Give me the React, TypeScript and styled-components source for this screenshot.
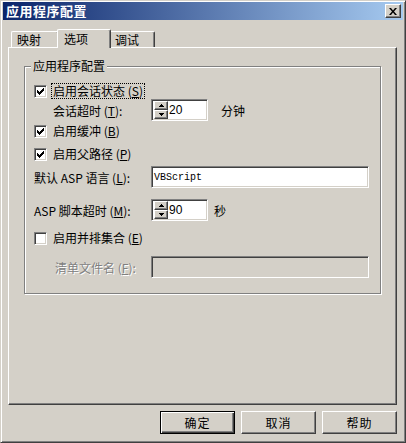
import styled, { createGlobalStyle } from "styled-components";

const GlobalStyle = createGlobalStyle`
  html, body {
    margin: 0;
    padding: 0;
    background: #d4d0c8;
  }
  * {
    box-sizing: border-box;
  }
`;

const FACE = "#d4d0c8";
const SHADOW = "#808080";
const DARK = "#404040";
const FONT = `"Noto Sans CJK SC", "Liberation Sans", sans-serif`;

const Window = styled.div`
  width: 406px;
  height: 443px;
  background: ${FACE};
  border: 1px solid;
  border-color: ${FACE} ${DARK} ${DARK} ${FACE};
  box-shadow: inset 1px 1px #fff, inset -1px -1px ${SHADOW};
  padding: 1px 2px 2px 2px;
  display: flex;
  flex-direction: column;
  font-family: ${FONT};
  font-size: 12px;
  color: #000;
`;

const TitleBar = styled.div`
  height: 18px;
  background: linear-gradient(to right, #0a246a, #a6caf0);
  display: flex;
  align-items: center;
  justify-content: space-between;
  padding: 0 2px 0 3px;
`;

const Title = styled.span`
  color: #fff;
  font-weight: bold;
  font-size: 13px;
  letter-spacing: 0.5px;
  line-height: 18px;
`;

const CloseButton = styled.div`
  width: 16px;
  height: 14px;
  background: ${FACE};
  border: 1px solid;
  border-color: #fff ${DARK} ${DARK} #fff;
  box-shadow: inset -1px -1px ${SHADOW};
  display: flex;
  align-items: center;
  justify-content: center;
`;

const Body = styled.div`
  flex: 1;
  display: flex;
  flex-direction: column;
  padding: 8px 6px 0 5px;
`;

const TabRow = styled.div`
  display: flex;
  align-items: flex-end;
  height: 19px;
  padding-left: 3px;
  position: relative;
  z-index: 1;
`;

const Tab = styled.div<{ $width: number; $active?: boolean }>`
  width: ${({ $width }) => $width}px;
  height: ${({ $active }) => ($active ? 19 : 16)}px;
  margin: ${({ $active }) => ($active ? "0 -2px -1px -2px" : "0")};
  padding-left: ${({ $active }) => ($active ? 6 : 5)}px;
  background: ${FACE};
  border-top: 1px solid #fff;
  border-left: 1px solid #fff;
  border-right: 1px solid ${DARK};
  border-radius: 2px 2px 0 0;
  box-shadow: inset -1px 0 ${SHADOW};
  line-height: ${({ $active }) => ($active ? 17 : 15)}px;
  position: relative;
  z-index: ${({ $active }) => ($active ? 2 : 1)};
`;

const Panel = styled.div`
  height: 358px;
  border: 1px solid;
  border-color: #fff ${DARK} ${DARK} #fff;
  box-shadow: inset -1px -1px ${SHADOW};
  padding: 18px 15px 0 15px;
`;

const GroupBox = styled.div`
  position: relative;
  height: 228px;
  border: 1px solid ${SHADOW};
  box-shadow: 1px 1px #fff, inset 1px 1px #fff;
  padding: 0 0 0 9px;
  display: flex;
  flex-direction: column;
`;

const Legend = styled.span`
  position: absolute;
  top: -9px;
  left: 6px;
  padding: 0 2px;
  background: ${FACE};
  line-height: 16px;
`;

const Row = styled.div<{ $top: number; $height: number }>`
  margin-top: ${({ $top }) => $top}px;
  height: ${({ $height }) => $height}px;
  display: flex;
  align-items: center;
`;

const Box = styled.div`
  width: 13px;
  height: 13px;
  background: #fff;
  border: 1px solid;
  border-color: ${SHADOW} #fff #fff ${SHADOW};
  box-shadow: inset 1px 1px ${DARK}, inset -1px -1px ${FACE};
  display: flex;
  align-items: center;
  justify-content: center;
  flex-shrink: 0;
`;

const CheckLabel = styled.span<{ $focus?: boolean }>`
  margin-left: 4px;
  padding: 0 1px;
  line-height: 14px;
  white-space: pre;
  border: 1px dotted ${({ $focus }) => ($focus ? "#000" : "transparent")};
`;

const FieldLabel = styled.span<{ $indent?: number; $disabled?: boolean }>`
  width: 117px;
  flex-shrink: 0;
  padding-left: ${({ $indent = 0 }) => $indent}px;
  white-space: pre;
  color: ${({ $disabled }) => ($disabled ? SHADOW : "#000")};
  text-shadow: ${({ $disabled }) => ($disabled ? "1px 1px #fff" : "none")};
`;

const Sunken = styled.div<{ $width: number; $disabled?: boolean }>`
  width: ${({ $width }) => $width}px;
  height: 22px;
  background: ${({ $disabled }) => ($disabled ? FACE : "#fff")};
  border: 1px solid;
  border-color: ${SHADOW} #fff #fff ${SHADOW};
  box-shadow: inset 1px 1px ${DARK}, inset -1px -1px ${FACE};
  display: flex;
  align-items: center;
  padding: 2px;
`;

const MonoText = styled.span`
  font-family: "Liberation Mono", "DejaVu Sans Mono", monospace;
  font-size: 10px;
`;

const SpinButtons = styled.div`
  width: 14px;
  height: 18px;
  display: flex;
  flex-direction: column;
  flex-shrink: 0;
`;

const SpinHalf = styled.div`
  flex: 1;
  background: ${FACE};
  border: 1px solid;
  border-color: #fff ${DARK} ${DARK} #fff;
  box-shadow: inset -1px -1px ${SHADOW};
  display: flex;
  align-items: center;
  justify-content: center;
`;

const SpinValue = styled.span`
  font-family: "Liberation Sans", Arial, sans-serif;
  font-size: 12px;
  margin-left: 1px;
`;

const Unit = styled.span<{ $gap: number }>`
  margin-left: ${({ $gap }) => $gap}px;
`;

const Key = styled.u`
  text-underline-offset: 1px;
`;

const ButtonBar = styled.div`
  display: flex;
  justify-content: flex-end;
  gap: 6px;
  margin-top: 6px;
`;

const Button = styled.div<{ $default?: boolean }>`
  width: 75px;
  height: 23px;
  background: ${FACE};
  border: 1px solid ${({ $default }) => ($default ? "#000" : "#fff")};
  border-right-color: ${({ $default }) => ($default ? "#000" : DARK)};
  border-bottom-color: ${({ $default }) => ($default ? "#000" : DARK)};
  box-shadow: ${({ $default }) =>
    $default
      ? `inset 1px 1px #fff, inset -1px -1px ${DARK}, inset -2px -2px ${SHADOW}`
      : `inset -1px -1px ${SHADOW}`};
  display: flex;
  align-items: center;
  justify-content: center;
  letter-spacing: 1px;
`;

const Check = () => (
  <svg width="7" height="7" viewBox="0 0 7 7">
    <path d="M0 2h1v1h1v1h1v-1h1v-1h1v-1h1v-1h1v3h-1v1h-1v1h-1v1h-1v1h-1v-1h-1v-1h-1z" fill="#000" />
  </svg>
);

const Arrow = ({ up }: { up?: boolean }) => (
  <svg width="5" height="3" viewBox="0 0 5 3">
    <path d={up ? "M2 0h1v1h1v1h1v1h-5v-1h1v-1h1z" : "M0 0h5v1h-1v1h-1v1h-1v-1h-1v-1h-1z"} fill="#000" />
  </svg>
);

const Spin = ({ value }: { value: string }) => (
  <Sunken $width={57}>
    <SpinButtons>
      <SpinHalf>
        <Arrow up />
      </SpinHalf>
      <SpinHalf>
        <Arrow />
      </SpinHalf>
    </SpinButtons>
    <SpinValue>{value}</SpinValue>
  </Sunken>
);

export default function App() {
  return (
    <>
      <GlobalStyle />
      <Window>
        <TitleBar>
          <Title>应用程序配置</Title>
          <CloseButton>
            <svg width="8" height="7" viewBox="0 0 8 7">
              <path d="M0 0h2l2 2.5l2-2.5h2l-3 3.5l3 3.5h-2l-2-2.5l-2 2.5h-2l3-3.5z" fill="#000" />
            </svg>
          </CloseButton>
        </TitleBar>
        <Body>
          <TabRow>
            <Tab $width={48}>映射</Tab>
            <Tab $width={54} $active>
              选项
            </Tab>
            <Tab $width={46}>调试</Tab>
          </TabRow>
          <Panel>
            <GroupBox>
              <Legend>应用程序配置</Legend>
              <Row $top={16} $height={16}>
                <Box>
                  <Check />
                </Box>
                <CheckLabel $focus>
                  启用会话状态 (<Key>S</Key>)
                </CheckLabel>
              </Row>
              <Row $top={0} $height={22}>
                <FieldLabel $indent={19}>
                  会话超时 (<Key>T</Key>):
                </FieldLabel>
                <Spin value="20" />
                <Unit $gap={13}>分钟</Unit>
              </Row>
              <Row $top={2} $height={16}>
                <Box>
                  <Check />
                </Box>
                <CheckLabel>
                  启用缓冲 (<Key>B</Key>)
                </CheckLabel>
              </Row>
              <Row $top={7} $height={16}>
                <Box>
                  <Check />
                </Box>
                <CheckLabel>
                  启用父路径 (<Key>P</Key>)
                </CheckLabel>
              </Row>
              <Row $top={4} $height={22}>
                <FieldLabel $indent={-1}>
                  默认 ASP 语言 (<Key>L</Key>):
                </FieldLabel>
                <Sunken $width={218}>
                  <MonoText>VBScript</MonoText>
                </Sunken>
              </Row>
              <Row $top={11} $height={22}>
                <FieldLabel $indent={-1}>
                  ASP 脚本超时 (<Key>M</Key>):
                </FieldLabel>
                <Spin value="90" />
                <Unit $gap={6}>秒</Unit>
              </Row>
              <Row $top={9} $height={16}>
                <Box />
                <CheckLabel>
                  启用并排集合 (<Key>E</Key>)
                </CheckLabel>
              </Row>
              <Row $top={10} $height={22}>
                <FieldLabel $indent={21} $disabled>
                  清单文件名 (<Key>F</Key>):
                </FieldLabel>
                <Sunken $width={218} $disabled />
              </Row>
            </GroupBox>
          </Panel>
          <ButtonBar>
            <Button $default>确定</Button>
            <Button>取消</Button>
            <Button>帮助</Button>
          </ButtonBar>
        </Body>
      </Window>
    </>
  );
}
